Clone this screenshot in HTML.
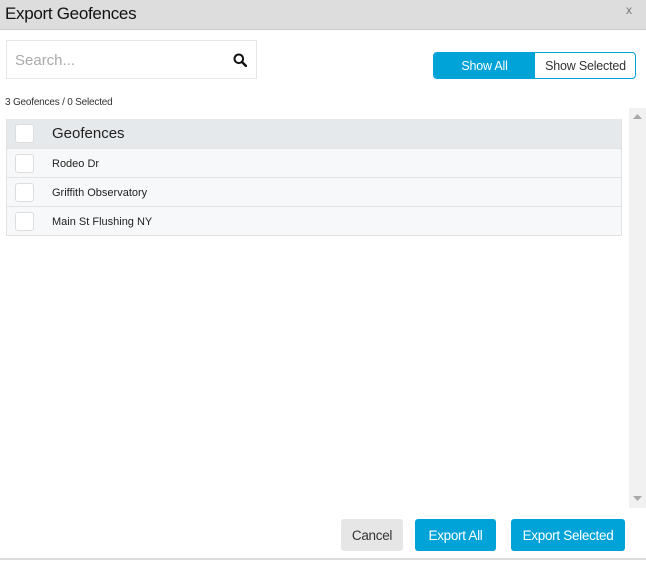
<!DOCTYPE html><html><head><style>
body{margin:0;width:646px;height:561px;background:#fff;font-family:"Liberation Sans",sans-serif;position:relative;overflow:hidden;color:#222}
div{position:absolute;box-sizing:border-box}
.hdr{left:0;top:0;width:646px;height:30px;background:#dddddd;border-bottom:1px solid #c8c8c8}
.t{left:5px;top:4px;font-size:17px;color:#111;letter-spacing:-0.3px}
.x{left:626px;top:3px;font-size:12px;color:#777}
.search{left:6px;top:40px;width:251px;height:39px;border:1px solid #e6e6e6}
.ph{left:8px;top:11px;font-size:15px;color:#aaa}
.tog{left:433px;top:52px;width:203px;height:27px;border:1px solid #00a3d7;border-radius:4px;overflow:hidden}
.tog span{position:absolute;top:0;height:25px;line-height:26px;font-size:12.5px;text-align:center;letter-spacing:-0.2px}
.cnt{left:5px;top:97px;font-size:10px;color:#333;letter-spacing:-0.2px}
.tbl{left:6px;top:119px;width:616px;border:1px solid #e2e2e2;border-top:none}
.row{position:relative;height:29px;background:#f7f8f9;border-top:1px solid #e4e4e4;font-size:11px;line-height:30px;padding-left:45px}
.row:first-child{border-top:none;background:#e6e9ec;font-size:15px;height:29px}
.cb{position:absolute;left:8px;top:5px;width:17px;height:17px;background:#fff;border:1px solid #ddd;border-radius:3px}
.sb{left:629px;top:108px;width:17px;height:400px;background:#f1f1f1}
.btn{top:519px;height:32px;border-radius:3px;font-size:13.5px;line-height:33px;text-align:center;color:#fff;background:#00a3d7;letter-spacing:-0.3px}
</style></head><body>
<div class="hdr"><div class="t">Export Geofences</div><div class="x">x</div></div>
<div class="search"><div class="ph">Search...</div>
<svg style="position:absolute;left:226px;top:12px" width="14" height="14" viewBox="0 0 14 14"><circle cx="5.8" cy="5.8" r="4.3" fill="none" stroke="#111" stroke-width="2"/><path d="M9 9L13 13" stroke="#111" stroke-width="2.4" stroke-linecap="round"/></svg></div>
<div class="tog"><span style="left:0;width:101px;background:#00a3d7;color:#fff">Show All</span><span style="left:101px;width:101px;color:#333">Show Selected</span></div>
<div class="cnt">3 Geofences / 0 Selected</div>
<div class="tbl">
<div class="row"><i class="cb"></i>Geofences</div>
<div class="row"><i class="cb"></i>Rodeo Dr</div>
<div class="row"><i class="cb"></i>Griffith Observatory</div>
<div class="row"><i class="cb"></i>Main St Flushing NY</div>
</div>
<div class="sb"><svg style="position:absolute;left:4px;top:6px" width="9" height="6"><path d="M0 5L4.5 0L9 5Z" fill="#aaa"/></svg><svg style="position:absolute;left:4px;top:388px" width="9" height="6"><path d="M0 0L4.5 5L9 0Z" fill="#aaa"/></svg></div>
<div class="btn" style="left:341px;width:62px;background:#e6e6e6;color:#333">Cancel</div>
<div class="btn" style="left:415px;width:81px">Export All</div>
<div class="btn" style="left:511px;width:114px">Export Selected</div>
<div style="left:0;top:558px;width:646px;height:2px;background:#ddd"></div>
</body></html>
